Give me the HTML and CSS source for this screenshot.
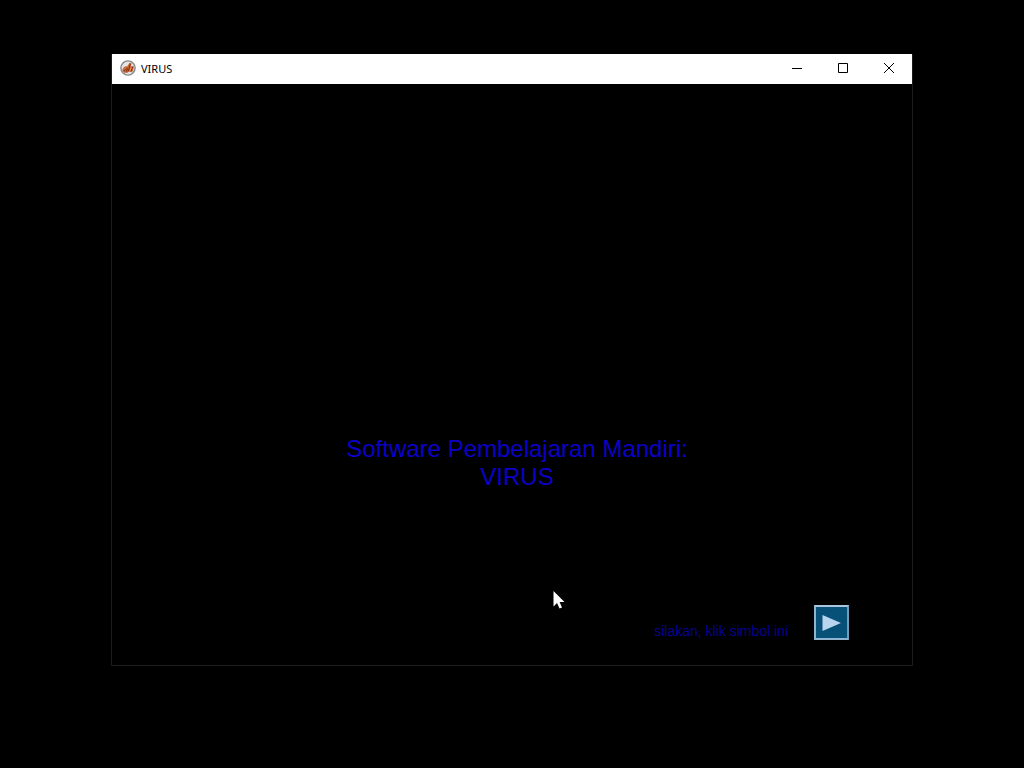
FILE: index.html
```html
<!DOCTYPE html>
<html lang="id">
<head>
    <meta charset="UTF-8">
    <meta name="viewport" content="width=device-width, initial-scale=1.0">
    <title>VIRUS</title>
    <link rel="stylesheet" href="styles.css">
</head>
<body>
    <div class="window">
        <div class="titlebar">
            <svg class="app-icon" viewBox="0 0 16 16" aria-hidden="true">
                <circle cx="8" cy="8" r="7.1" fill="#e6e4e4" stroke="#85868a" stroke-width="1.4"/>
                <path d="M2.4 10.6C2.8 7.6 4.8 6 7.2 6.4L9.6 2.8 11.6 3.2 10.6 6.4 13.6 5.8C14 8 13.4 10.4 12 12.2L9 11.6 7.6 12.8 4.4 12.8Z" fill="#c4622f"/>
                <path d="M4 11.4C5 8.8 6 8.2 7.2 8.4L6.8 11.4M10.4 3.8L8.4 11.2M12.6 7L11 11" fill="none" stroke="#7c2a12" stroke-width="0.9"/>
                <path d="M4 9.6L6 7.6M11.4 7.4L10 10.6" fill="none" stroke="#f3a277" stroke-width="0.9"/>
            </svg>
            <span class="caption">VIRUS</span>
            <div class="controls">
                <button type="button" aria-label="Minimize">
                    <svg viewBox="0 0 12 12"><path d="M1 6.5H11"/></svg>
                </button>
                <button type="button" aria-label="Maximize">
                    <svg viewBox="0 0 12 12"><path d="M1.5 1.5H10.5V10.5H1.5Z"/></svg>
                </button>
                <button type="button" aria-label="Close">
                    <svg viewBox="0 0 12 12"><path d="M1 1L11 11M11 1L1 11"/></svg>
                </button>
            </div>
        </div>

        <div class="stage">
            <h1>Software Pembelajaran Mandiri:<br>VIRUS</h1>
            <div class="start">
                <label for="next">silakan, klik simbol ini</label>
                <button type="button" id="next" class="next">
                    <svg viewBox="0 0 20 18" aria-hidden="true"><path d="M0.5 1L19 9 0.5 17Z" fill="#b9d4ee"/></svg>
                </button>
            </div>
        </div>
    </div>

    <!-- Mouse pointer -->
    <svg class="pointer" viewBox="0 0 12 19" aria-hidden="true">
        <path d="M0.5 0V15.5L4 12 6.5 17.5 9 16.4 6.6 11H11.5Z" fill="#fff"/>
    </svg>
</body>
</html>
```

FILE: styles.css
```css
* {
    box-sizing: border-box;
}
body {
    font-family: "Liberation Sans", Arial, sans-serif;
    background-color: #000;
    margin: 0;
    padding: 54px 111px 102px;
    min-height: 100vh;
    display: flex;
    position: relative;
}
.window {
    flex: 1;
    display: flex;
    flex-direction: column;
    border: 1px solid #1c1c1c;
    border-top: none;
}
.titlebar {
    display: flex;
    align-items: center;
    height: 30px;
    padding-left: 8px;
    background-color: #fff;
}
.app-icon {
    width: 16px;
    height: 16px;
    margin-bottom: 2px;
}
.caption {
    margin-left: 5px;
    font-family: "Noto Sans", sans-serif;
    font-size: 11px;
    line-height: 30px;
    color: #000;
}
.controls {
    display: flex;
    margin-left: auto;
}
.controls button {
    display: flex;
    align-items: center;
    justify-content: center;
    width: 46px;
    height: 30px;
    padding: 0 0 2px;
    border: none;
    background: none;
}
.controls svg {
    width: 12px;
    height: 12px;
    fill: none;
    stroke: #000;
    stroke-width: 1;
}
.stage {
    flex: 1;
    display: flex;
    flex-direction: column;
    justify-content: flex-end;
    padding: 0 63px 25px 73px;
}
h1 {
    margin: 0 0 114px;
    font-size: 24px;
    font-weight: normal;
    line-height: 28px;
    text-align: center;
    color: #0c00c8;
}
.start {
    display: flex;
    align-items: center;
    justify-content: flex-end;
    gap: 26px;
}
.start label {
    padding-top: 16px;
    font-size: 14px;
    line-height: 18px;
    color: #080090;
}
.next {
    display: flex;
    align-items: center;
    justify-content: center;
    width: 35px;
    height: 35px;
    padding: 0;
    border: 2px solid;
    border-color: #a9c6de #6f9dbb #8fb4cf #8fb4cf;
    background-color: #075078;
}
.next svg {
    width: 20px;
    height: 18px;
}
.pointer {
    position: absolute;
    left: 54%;
    top: 77%;
    width: 12px;
    height: 19px;
}
```
